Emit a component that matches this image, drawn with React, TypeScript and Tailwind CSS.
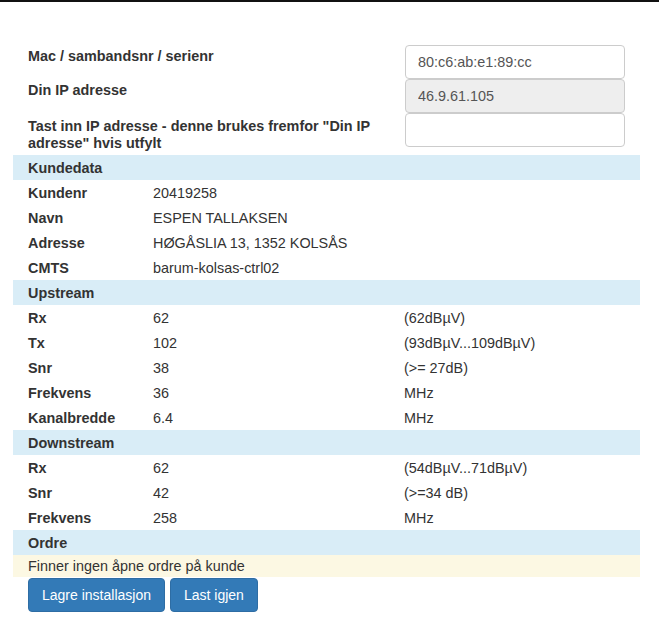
import React from "react";

const headerCls = "bg-[#d9edf7] h-[25px] flex items-center pt-[2px] px-[15px] font-bold";

function Row({ label, value, extra }: { label: string; value: string; extra?: string }) {
  return (
    <div className="h-[25px] flex items-center pt-[2px] px-[15px]">
      <div className="w-[125px] font-bold">{label}</div>
      <div className="w-[251px]">{value}</div>
      <div>{extra}</div>
    </div>
  );
}

export default function App() {
  return (
    <div className="min-h-[630px] bg-white text-[14.4px] text-[#333] font-['Liberation_Sans',Arial,sans-serif]">
      <div className="h-[2px] bg-[#111]" />
      <div className="px-[13px] pt-[43px] w-[627px] box-content">
        {/* form fields */}
        <div className="flex flex-col">
          <div className="flex h-[34px]">
            <div className="w-[392px] pl-[15px] pt-[3px] font-bold leading-[17px]">Mac / sambandsnr / serienr</div>
            <input
              className="w-[220px] h-[34px] border border-[#ccc] rounded-[4px] px-[12px] text-[#555] bg-white outline-none"
              defaultValue="80:c6:ab:e1:89:cc"
            />
          </div>
          <div className="flex h-[34px]">
            <div className="w-[392px] pl-[15px] pt-[3px] font-bold leading-[17px]">Din IP adresse</div>
            <input
              className="w-[220px] h-[34px] border border-[#ccc] rounded-[4px] px-[12px] text-[#555] bg-[#eee] outline-none"
              defaultValue="46.9.61.105"
              disabled
            />
          </div>
          <div className="flex h-[34px]">
            <div className="w-[392px] pl-[15px] pr-[20px] pt-[5px] font-bold leading-[17px]">
              Tast inn IP adresse - denne brukes fremfor "Din IP adresse" hvis utfylt
            </div>
            <input className="w-[220px] h-[34px] border border-[#ccc] rounded-[4px] px-[12px] text-[#555] bg-white outline-none" />
          </div>
        </div>

        <div className="mt-[8px]">
          <div className={headerCls}>Kundedata</div>
          <Row label="Kundenr" value="20419258" />
          <Row label="Navn" value="ESPEN TALLAKSEN" />
          <Row label="Adresse" value="HØGÅSLIA 13, 1352 KOLSÅS" />
          <Row label="CMTS" value="barum-kolsas-ctrl02" />
          <div className={headerCls}>Upstream</div>
          <Row label="Rx" value="62" extra="(62dBµV)" />
          <Row label="Tx" value="102" extra="(93dBµV...109dBµV)" />
          <Row label="Snr" value="38" extra="(>= 27dB)" />
          <Row label="Frekvens" value="36" extra="MHz" />
          <Row label="Kanalbredde" value="6.4" extra="MHz" />
          <div className={headerCls}>Downstream</div>
          <Row label="Rx" value="62" extra="(54dBµV...71dBµV)" />
          <Row label="Snr" value="42" extra="(>=34 dB)" />
          <Row label="Frekvens" value="258" extra="MHz" />
          <div className={headerCls}>Ordre</div>
          <div className="bg-[#fcf8e3] h-[22px] flex items-center pt-[1px] px-[15px]">Finner ingen åpne ordre på kunde</div>
        </div>

        <div className="flex gap-[5px] pl-[15px] mt-[1px]">
          <button className="h-[34px] px-[13px] bg-[#337ab7] border border-[#2e6da4] rounded-[4px] text-[14px] text-white">
            Lagre installasjon
          </button>
          <button className="h-[34px] px-[13px] bg-[#337ab7] border border-[#2e6da4] rounded-[4px] text-[14px] text-white">
            Last igjen
          </button>
        </div>
      </div>
    </div>
  );
}
